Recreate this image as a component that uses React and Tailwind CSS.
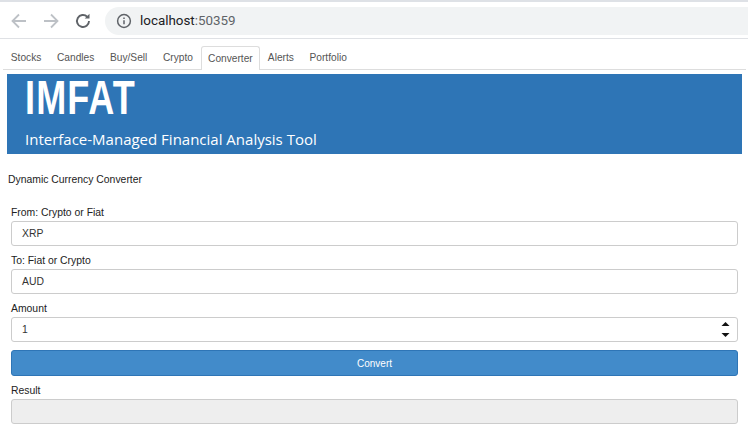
const tabs = ['Stocks', 'Candles', 'Buy/Sell', 'Crypto', 'Converter', 'Alerts', 'Portfolio']

const sans = "font-['Liberation_Sans',Arial,sans-serif]"

function Field({ label, value, top }) {
  return (
    <div className={top}>
      <label className="block text-[10.4px] leading-[14px] text-[#222]">{label}</label>
      <div className="mt-[1px] h-[25px] flex items-center rounded-[3px] border border-[#ccc] bg-white pl-[10px] text-[10.4px] text-[#333]">
        {value}
      </div>
    </div>
  )
}

export default function App() {
  return (
    <div className={`w-[748px] h-[432px] overflow-hidden bg-white ${sans}`}>
      {/* Browser bar */}
      <div className="h-[39px] border-t-2 border-b border-t-[#dee1e6] border-b-[#dfe1e5] flex items-center pt-[2px]">
        <div className="flex items-center pl-[10px] gap-[14px] w-[105px]">
          <svg width="18" height="18" viewBox="0 0 18 18" fill="none" stroke="#bdc1c6" strokeWidth="1.8">
            <path d="M16 9H2.5M9 2.5 2.5 9 9 15.5" />
          </svg>
          <svg width="18" height="18" viewBox="0 0 18 18" fill="none" stroke="#bdc1c6" strokeWidth="1.8">
            <path d="M2 9h13.5M9 2.5 15.5 9 9 15.5" />
          </svg>
          <svg width="18" height="18" viewBox="0 0 18 18" fill="none" stroke="#5f6368" strokeWidth="1.9">
            <path d="M15 9a6 6 0 1 1-1.8-4.3" />
            <path d="M15.5 1.8v4.8h-4.8" fill="#5f6368" stroke="none" />
          </svg>
        </div>
        <div className="flex-1 h-[28px] rounded-l-[14px] bg-[#f1f3f4] flex items-center pl-[11px] gap-[8px]">
          <svg width="16" height="16" viewBox="0 0 16 16" fill="none" stroke="#5f6368" strokeWidth="1.5">
            <circle cx="8" cy="8" r="6.4" />
            <path d="M8 7.2v4M8 4.4v1.6" />
          </svg>
          <span className="font-['Roboto',sans-serif] text-[13.4px] text-[#202124]">
            localhost<span className="text-[#5f6368]">:50359</span>
          </span>
        </div>
      </div>

      {/* Tabs */}
      <nav className="mt-[7px] ml-[3px] mr-[2px] h-[24px] flex border-b border-[#ddd] text-[10.2px] text-[#555]">
        {tabs.map((t) => (
          <span
            key={t}
            className={
              t === 'Converter'
                ? 'h-[24px] px-[6.3px] rounded-t-[3px] border border-b-0 border-[#ddd] bg-white flex items-center'
                : 'h-[23px] px-[7.8px] flex items-center'
            }
          >
            {t}
          </span>
        ))}
      </nav>

      {/* Banner */}
      <div className="mt-[4px] ml-[7px] mr-[6px] h-[80px] bg-[#2e75b6] text-white pl-[18px]">
        <h1 className="font-bold text-[48px] leading-[48px] tracking-[1.5px] origin-left scale-x-[0.75] w-fit">IMFAT</h1>
        <p className="mt-[6px] font-['Open_Sans',sans-serif] text-[15px] leading-[22px]">Interface-Managed Financial Analysis Tool</p>
      </div>

      <p className="mt-[20px] ml-[8px] text-[10.4px] leading-[12px] text-[#222]">Dynamic Currency Converter</p>

      {/* Form */}
      <div className="mt-[20px] ml-[11px] w-[727px]">
        <Field label="From: Crypto or Fiat" value="XRP" />
        <Field label="To: Fiat or Crypto" value="AUD" top="mt-[8px]" />
        <div className="mt-[8px]">
          <label className="block text-[10.4px] leading-[14px] text-[#222]">Amount</label>
          <div className="mt-[1px] h-[25px] flex items-center justify-between rounded-[3px] border border-[#ccc] bg-white pl-[10px] pr-[7px] text-[10.4px] text-[#333]">
            1
            <svg width="9" height="17" viewBox="0 0 9 17" fill="#111">
              <path d="M4.5 1 8.5 5H.5zM.5 12h8l-4 4z" />
            </svg>
          </div>
        </div>
        <button className="mt-[8px] w-full h-[26px] rounded-[3px] border border-[#2e75b6] bg-[#428bca] text-white text-[10px]">Convert</button>
        <label className="mt-[8px] block text-[10.4px] leading-[14px] text-[#222]">Result</label>
        <div className="mt-[1px] h-[25px] rounded-[3px] border border-[#ccc] bg-[#eee]" />
      </div>
    </div>
  )
}
